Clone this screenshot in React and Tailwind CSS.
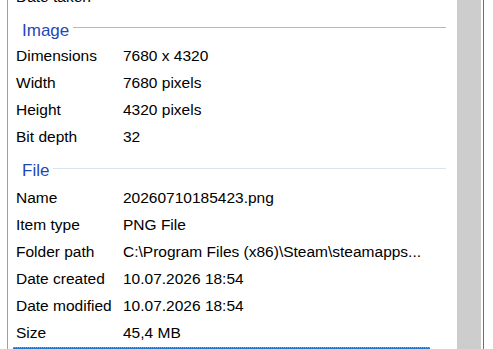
import React from 'react';

const imageRows = [
  ['Dimensions', '7680 x 4320'],
  ['Width', '7680 pixels'],
  ['Height', '4320 pixels'],
  ['Bit depth', '32'],
];

const fileRows = [
  ['Name', '20260710185423.png'],
  ['Item type', 'PNG File'],
  ['Folder path', 'C:\\Program Files (x86)\\Steam\\steamapps...'],
  ['Date created', '10.07.2026 18:54'],
  ['Date modified', '10.07.2026 18:54'],
];

function Row({ label, value }) {
  return (
    <div className="flex h-[27px] items-center pl-[8px] text-black">
      <span className="w-[107px] shrink-0 whitespace-nowrap">{label}</span>
      <span className="whitespace-nowrap">{value}</span>
    </div>
  );
}

// group header: blue title followed by a thin rule
function Header({ title, lineColor, lineOffset, height }) {
  return (
    <div className={`flex ${height} items-start pl-[14px] pr-[11px]`}>
      <div className="mt-[9px] flex w-full items-center">
        <span className="text-[17px] leading-[21px] text-[#1f47b8]">{title}</span>
        <div className={`ml-[4px] h-px flex-1 ${lineColor} ${lineOffset}`}></div>
      </div>
    </div>
  );
}

export default function App() {
  return (
    <div
      className="flex h-[349px] w-[493px] overflow-hidden bg-white text-[15.5px]"
      style={{ fontFamily: '"Liberation Sans", Arial, sans-serif' }}
    >
      <div className="ml-[7px] flex-1 border-l border-[#a0a0a0]">
        <div className="-mt-[16.5px]">
          <Row label="Date taken" value="" />
          <Header title="Image" lineColor="bg-[#a6badf]" lineOffset="-translate-y-[3px]" height="h-[32px]" />
          {imageRows.map(([l, v]) => (
            <Row key={l} label={l} value={v} />
          ))}
          <Header title="File" lineColor="bg-[#dbe3f0]" lineOffset="-translate-y-[2px]" height="h-[34px]" />
          {fileRows.map(([l, v]) => (
            <Row key={l} label={l} value={v} />
          ))}
          <Row label="Size" value="45,4 MB" />
          {/* focus rectangle edge of the selected row */}
          <div className="ml-[5px] mr-[27px]">
            <div className="h-px bg-[repeating-linear-gradient(90deg,#e8912c_0_1px,#1e7bd4_1px_2px)]"></div>
            <div className="h-px bg-[#1e7bd4]"></div>
          </div>
        </div>
      </div>
      <div className="w-[24px] shrink-0 bg-[#cdcdcd]"></div>
      <div className="w-[2px] shrink-0 bg-white"></div>
      <div className="w-px shrink-0 bg-[#6f6f6f]"></div>
      <div className="w-[9px] shrink-0 bg-white"></div>
    </div>
  );
}
